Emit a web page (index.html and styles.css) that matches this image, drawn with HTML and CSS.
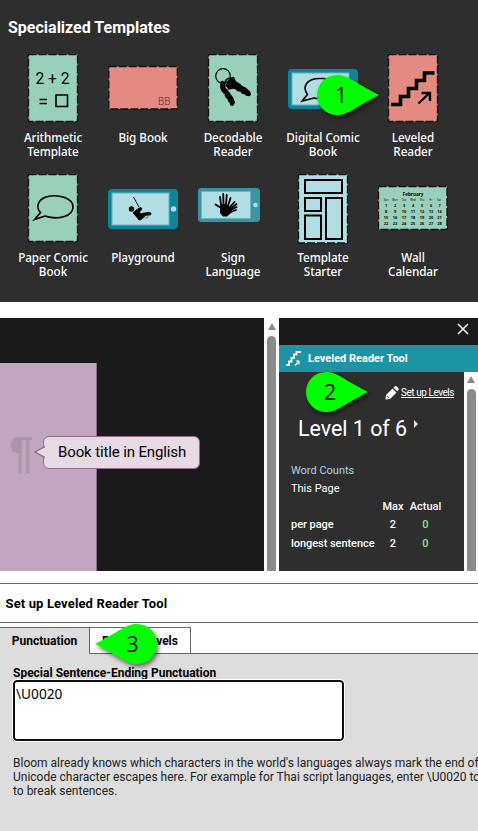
FILE: index.html
```html
<!DOCTYPE html>
<html lang="en">
<head>
<meta charset="utf-8">
<title>Leveled Reader</title>
<link rel="stylesheet" href="styles.css">
</head>
<body>
<section class="templates">
  <h2>Specialized Templates</h2>
  <div class="grid">
    <div class="card">
      <svg viewBox="0 0 70 70"><rect class="green" x="10.5" y=".5" width="49" height="67"/><text class="math" x="17.5" y="29.5" textLength="34" lengthAdjust="spacingAndGlyphs">2 + 2</text><path class="line" d="M21.500 45.500h7.500M21.500 49.500h7.500M38 41h11.500v11.500H38z"/></svg>
      <span>Arithmetic<br>Template</span>
    </div>
    <div class="card">
      <svg viewBox="0 0 70 70"><rect class="red" x=".8" y="12.500" width="68.500" height="42.500"/><text class="bb" x="50" y="50.500">BB</text></svg>
      <span>Big Book</span>
    </div>
    <div class="card">
      <svg viewBox="0 0 70 70"><rect class="green" x="10.5" y=".5" width="49" height="67"/><circle cx="25" cy="22" r="7.300" fill="none" stroke="#000" stroke-width="1.200"/><path d="M22.500 27.500q3-2 5 1l0 5 3 3.500 2 3 3 4 1.500 4.500-2 3.500-2.500-.5-1-3-1.500-1-.5-2.500-2-1.500-1-3-3.500-4-1-4z"/><path d="M30 27l2-3.500 4-.8 2 4.500 4 2.500 2 2 4 2 2 2 2 1.500 1 3-1 2-4-.5-1.500-1.500-2.500-.5-1.500-2-3-.5-2-2-3-.5-4 1-1-2-2-2z"/><path d="M27 30q0-6 6-6" fill="none" stroke="#000" stroke-width="1.500"/></svg>
      <span>Decodable<br>Reader</span>
    </div>
    <div class="card">
      <svg viewBox="0 0 70 70"><rect x="0" y="15" width="70" height="40" rx="4" fill="#0c8598"/><rect class="screen" x="4" y="19" width="57" height="32"/><circle cx="65.500" cy="35" r="2.500" fill="#b0dee4"/><path class="line" d="M19.500 40.500C14 33 18 24 33 24.500 46 24 50 30 49 35c-1 7-14 11-23 9L14 47z"/></svg>
      <span>Digital Comic<br>Book</span>
    </div>
    <div class="card">
      <svg viewBox="0 0 70 70"><rect class="red" x="10.5" y=".5" width="49" height="67"/><path d="M13 50.500h9.500v-8h8v-8h8v-8h8v-7.500h10" fill="none" stroke="#000" stroke-width="3.600"/><path d="M40.500 49.500l11-10.500M43.500 39h8.500v8" fill="none" stroke="#000" stroke-width="2.400"/></svg>
      <span>Leveled<br>Reader</span>
    </div>
    <div class="card">
      <svg viewBox="0 0 70 70"><rect class="green" x="10.5" y=".5" width="49" height="67"/><path class="line" d="M22.500 38.500C18 34 19 26 28 23 40 19.500 55 24 55 33c0 9-14 13.500-28 9L16.500 45.500z"/></svg>
      <span>Paper Comic<br>Book</span>
    </div>
    <div class="card">
      <svg viewBox="0 0 70 70"><rect x="0" y="15" width="70" height="40" rx="4" fill="#0c8598"/><rect class="screen" x="4" y="19" width="57" height="32"/><circle cx="65.500" cy="35" r="2.700" fill="#b0dee4"/><path d="M25.500 23l5.500 10" stroke="#111" stroke-width="1" fill="none"/><circle cx="23.500" cy="35" r="2.700"/><path d="M27 37l4-3 2-.5 1 1.500-2.500 3 1 2 3.500-1 5-.7 2 .7v1.600l-2.500.6-3.500 0-4 4.500-2 .3-4-5-2-2zM35 44.500l3-3.500M38 44.500l2-2" stroke="#000" stroke-width=".8"/></svg>
      <span>Playground</span>
    </div>
    <div class="card">
      <svg viewBox="0 0 70 70"><rect x="0" y="14" width="62" height="34" rx="3.500" fill="#3995a3"/><rect class="screen" x="3.500" y="17.500" width="49" height="27"/><circle cx="57.500" cy="31" r="2.300" fill="#b0dee4"/><path d="M17.500 30.500l4 2.500 2 1-1.500-11M25.500 31l-.3-11M28 31l.7-10M30 32l2.500-8M31 34l5.500-6M32 35l6.500-5M33 36l5.500-3M33 38l5-2" fill="none" stroke="#000" stroke-width="1.800" stroke-linecap="round"/><path d="M22 30h7l5 6-1 3-4 3.500h-4L22 39z"/></svg>
      <span>Sign<br>Language</span>
    </div>
    <div class="card">
      <svg viewBox="0 0 70 70"><rect class="blue" x="10.5" y=".5" width="49" height="68.500"/><path d="M17 6h37v13H17zM17 24h16v13H17zM38 24h16v41H38zM17 41.500h16V65H17z" fill="none" stroke="#000" stroke-width="2"/></svg>
      <span>Template<br>Starter</span>
    </div>
    <div class="card">
      <svg viewBox="0 0 70 70"><rect class="green" x=".5" y="12.500" width="68.500" height="43"/><text class="month" x="35" y="21.500">February</text>
      <g class="week"><text x="8" y="27">Sun</text><text x="17" y="27">Mon</text><text x="26" y="27">Tue</text><text x="35" y="27">Wed</text><text x="44" y="27">Thu</text><text x="53" y="27">Fri</text><text x="61" y="27">Sat</text></g>
      <g class="days"><text x="8" y="32.700">1</text><text x="17" y="32.700">2</text><text x="26" y="32.700">3</text><text x="35" y="32.700">4</text><text x="44" y="32.700">5</text><text x="53" y="32.700">6</text><text x="61.500" y="32.700">7</text><text x="8" y="38.800">8</text><text x="17" y="38.800">9</text><text x="26" y="38.800">10</text><text x="35" y="38.800">11</text><text x="44" y="38.800">12</text><text x="53" y="38.800">13</text><text x="61.500" y="38.800">14</text><text x="8" y="44.900">15</text><text x="17" y="44.900">16</text><text x="26" y="44.900">17</text><text x="35" y="44.900">18</text><text x="44" y="44.900">19</text><text x="53" y="44.900">20</text><text x="61.500" y="44.900">21</text><text x="8" y="51">22</text><text x="17" y="51">23</text><text x="26" y="51">24</text><text x="35" y="51">25</text><text x="44" y="51">26</text><text x="53" y="51">27</text><text x="61.500" y="51">28</text></g></svg>
      <span>Wall<br>Calendar</span>
    </div>
  </div>
</section>

<section class="editor">
  <div class="canvas">
    <div class="page"><span class="pilcrow">¶</span></div>
    <div class="bubble">Book title in English<svg viewBox="0 0 11 12"><path d="M11 .5L1 6l10 5.500" fill="#e7dae5" stroke="#96668f" stroke-width="1.400"/></svg></div>
  </div>
  <div class="scroll"><i class="arrow"></i><i class="thumb"></i></div>
  <div class="panel">
    <div class="close"><svg viewBox="0 0 12 12"><path d="M1 1l10 10M11 1L1 11" stroke="#eee" stroke-width="1.700"/></svg></div>
    <div class="toolname"><svg viewBox="0 0 16 17"><path d="M0 15h3v-3.500h2.500V8H8V4.500h2.500V2H15" fill="none" stroke="#fff" stroke-width="1.800"/><path d="M9 15.500l4-4M10 11h3v3.500" fill="none" stroke="#fff" stroke-width="1.100"/></svg>Leveled Reader Tool</div>
    <div class="body">
      <div class="tool">
        <div class="setup"><svg viewBox="0 0 14 14"><path d="M1 9l6.500-6.500 4 4L5 13l-4.500.5zM8.500 1.700L10 .3q1-.6 2 .4l1.300 1.300q.8 1 0 2l-1 1.300z" fill="#fff"/><path d="M2 10l2 2" stroke="#2e2e2e" stroke-width=".8"/></svg><a>Set up Levels</a></div>
        <div class="level">Level 1 of 6<i></i></div>
        <div class="counts">Word Counts</div>
        <div class="this">This Page</div>
        <div class="table">
          <span></span><b>Max</b><b>Actual</b>
          <span>per page</span><b>2</b><b class="ok">0</b>
          <span>longest sentence</span><b>2</b><b class="ok">0</b>
        </div>
      </div>
      <div class="scroll"><i class="arrow"></i><i class="thumb"></i></div>
    </div>
  </div>
</section>

<section class="dialog">
  <h3>Set up Leveled Reader Tool</h3>
  <div class="tabs"><div class="tab active">Punctuation</div><div class="tab second">Reader Levels</div><div class="rest"></div></div>
  <div class="content">
    <label>Special Sentence-Ending Punctuation</label>
    <div class="input">\U0020</div>
    <p>Bloom already knows which characters in the world's languages always mark the end of<br>Unicode character escapes here. For example for Thai script languages, enter \U0020 to<br>to break sentences.</p>
  </div>
</section>

<svg class="pin pin1" viewBox="0 0 62 40"><path d="M20 0C31 0 35 6 62 20 35 34 31 40 20 40a20 20 0 0 1 0-40z"/><text x="24" y="28">1</text></svg>
<svg class="pin pin2" viewBox="0 0 62 40"><path d="M20 0C31 0 35 6 62 20 35 34 31 40 20 40a20 20 0 0 1 0-40z"/><text x="24" y="28">2</text></svg>
<svg class="pin pin3" viewBox="0 0 62 40"><path d="M42 0C31 0 27 6 0 20 27 34 31 40 42 40a20 20 0 0 0 0-40z"/><text x="37.500" y="28">3</text></svg>
</body>
</html>
```
FILE: styles.css
```css
* { box-sizing: border-box; }
body { margin: 0; width: 478px; height: 831px; position: relative; overflow: hidden; background: #fff; font-family: Roboto, "Liberation Sans", sans-serif; color: #000; }
svg { display: block; }
.templates { height: 302px; background: #2e2e2e; padding: 18px 20px 0 8px; }
h2 { margin: 0 0 16px; font-size: 16px; line-height: 20px; font-weight: 700; color: #fff; }
.grid { display: grid; grid-template-columns: repeat(5, 90px); grid-auto-rows: 120px; }
.card { display: flex; flex-direction: column; align-items: center; text-align: center; font: 500 11.7px/14px "Noto Sans", sans-serif; color: #fff; }
.card > svg { width: 70px; height: 70px; margin-bottom: 6px; flex: none; }
.card > span { letter-spacing: -0.05px; }
.green, .red, .blue { stroke: #111; stroke-width: 1.3; stroke-dasharray: 8 2; }
.green { fill: #98d0b9; }
.red { fill: #e48a82; }
.blue { fill: #b0dee4; }
.screen { fill: #b0dee4; stroke: #66b6c0; stroke-width: 1; }
.line { fill: none; stroke: #000; stroke-width: 1.6; }
.math { font: 400 17px Roboto, sans-serif; }
.bb { font: 300 10px Roboto, sans-serif; fill: #5b2c2b; }
.month { font: 700 4.6px "Noto Sans", sans-serif; text-anchor: middle; }
.week { font: 2.6px "Noto Sans", sans-serif; text-anchor: middle; }
.days { font: 700 3.9px "Noto Sans", sans-serif; text-anchor: middle; }

.editor { display: flex; height: 253px; margin-top: 16px; }
.canvas { width: 264px; background: #1a1a1a; padding-top: 45px; position: relative; }
.page { width: 97px; height: 208px; background: #c2a6bf; border-right: 1px solid #8d6f8a; padding: 67px 0 0 9px; }
.pilcrow { display: block; font: 700 44px/46px "Liberation Sans", sans-serif; color: #ac94aa; }
.bubble { position: absolute; left: 43px; top: 118px; width: 157px; height: 33px; border: 1.5px solid #96668f; border-radius: 6px; background: #e7dae5; font-size: 15px; letter-spacing: -0.13px; line-height: 30px; padding-left: 14px; white-space: nowrap; }
.bubble svg { position: absolute; left: -10px; top: 9px; width: 11px; height: 12px; }
.scroll { width: 15px; background: #fcfcfc; display: flex; flex-direction: column; align-items: center; flex: none; }
.arrow { border: 4.5px solid transparent; border-bottom: 7px solid #8b8b8b; border-top: 0; margin-top: 5px; }
.thumb { width: 9px; flex: 1; margin-top: 6px; background: #8b8b8b; border-radius: 5px 5px 0 0; }
.panel { width: 199px; display: flex; flex-direction: column; }
.close { height: 27px; background: #1a1a1a; display: flex; justify-content: flex-end; padding: 5px 9px 0 0; }
.close svg { width: 12px; height: 12px; }
.toolname { height: 27px; background: #1d94a4; color: #fff; font-weight: 700; font-size: 11px; display: flex; align-items: center; gap: 6px; padding-left: 7px; }
.toolname svg { width: 16px; height: 17px; }
.body { flex: 1; display: flex; }
.body .scroll { width: 14px; }
.body .arrow { margin-top: 4px; }
.tool { flex: 1; background: #2e2e2e; color: #fff; padding: 13px 0 0 12px; }
.setup { display: flex; align-items: center; gap: 2px; height: 15px; padding-left: 94px; font-size: 10px; letter-spacing: -0.45px; white-space: nowrap; }
.setup svg { width: 14px; height: 14px; }
.setup a { text-decoration: underline; }
.level { font-size: 21.4px; line-height: 24px; margin: 17px 0 0 7px; display: flex; }
.level i { margin: 3px 0 0 7px; height: 8px; border: 4px solid transparent; border-left-color: #ddd; border-right: 0; }
.counts { font-size: 11px; line-height: 18px; margin-top: 21px; color: #a5d5e0; }
.this { font-size: 11px; line-height: 18px; }
.table { display: grid; grid-template-columns: 87px 30px 35px; grid-template-rows: 17px 19px 19px; align-items: center; font-size: 11px; white-space: nowrap; }
.table b { font-weight: 500; text-align: center; }
.table .ok { color: #8be58b; }
.table span { font-weight: 500; letter-spacing: -0.05px; }

.dialog { margin-top: 12px; border-top: 1px solid #666; }
h3 { margin: 0; height: 39px; border-bottom: 1px solid #666; padding-left: 5.5px; font-size: 13px; letter-spacing: 0.13px; line-height: 40px; font-weight: 700; }
.tabs { display: flex; height: 31px; padding-top: 4px; font-size: 12px; font-weight: 700; line-height: 26px; }
.tab { border: 1px solid #666; border-left: 0; text-align: center; }
.active { width: 90px; background: #ddd; border-bottom: 0; }
.second { width: 101px; }
.rest { flex: 1; border-bottom: 1px solid #666; }
.content { height: 178px; background: #ddd; padding: 11px 0 0 13px; }
label { display: block; font-size: 12px; line-height: 16px; font-weight: 700; height: 15px; }
.input { width: 331px; height: 61px; border: 2px solid #101010; outline: 1px solid #fff; border-radius: 4px; background: #fff; padding: 3px 1px; font: 13.7px/18px "Noto Sans", sans-serif; }
p { margin: 15px 0 0; font-size: 12px; line-height: 14px; white-space: nowrap; color: #222; }

.pin { position: absolute; width: 62px; height: 40px; overflow: visible; filter: drop-shadow(2px 3px 2px rgba(0,0,0,.5)); }
.pin path { fill: #0f0; }
.pin text { font: 22px "Open Sans", sans-serif; text-anchor: middle; }
.pin1 { left: 317px; top: 75px; }
.pin2 { left: 306px; top: 372px; }
.pin3 { left: 95px; top: 624px; }
```
